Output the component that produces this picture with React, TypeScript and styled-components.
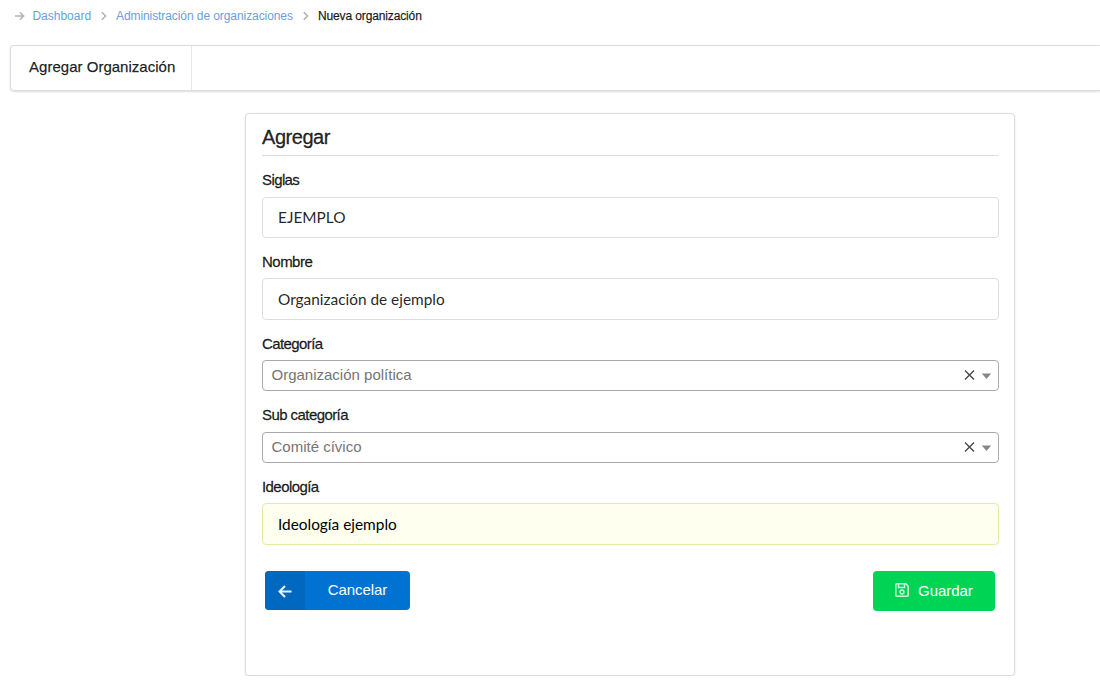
import React from 'react';
import styled, { createGlobalStyle } from 'styled-components';

const GlobalStyle = createGlobalStyle`
  * { box-sizing: border-box; }
  body {
    margin: 0;
    background: #fff;
    color: rgba(0, 0, 0, 0.87);
    font-family: "Liberation Sans", Arial, sans-serif;
    font-size: 14px;
    overflow: hidden;
  }
`;

const Breadcrumb = styled.nav`
  display: flex;
  align-items: center;
  height: 32px;
  padding-left: 14px;
  font-size: 12px;
  line-height: 16px;
  white-space: nowrap;
`;

const CrumbIcon = styled.svg`
  flex: none;
  fill: none;
  stroke: #b3b3b3;
  stroke-width: 1.6;
`;

const Crumb = styled.a<{ $width: number; $spacing: number }>`
  width: ${p => p.$width}px;
  letter-spacing: ${p => p.$spacing}px;
  color: #6a9edc;
`;

const CurrentCrumb = styled.span`
  letter-spacing: -0.13px;
  -webkit-text-stroke: 0.25px currentColor;
`;

const Menu = styled.div`
  display: flex;
  height: 46px;
  margin: 13px 0 0 10px;
  border: 1px solid #dcdddd;
  border-right: 0;
  border-radius: 4px 0 0 4px;
  box-shadow: 0 1px 2px rgba(34, 36, 38, 0.15);
`;

const MenuItem = styled.div`
  width: 181px;
  padding-left: 18px;
  border-right: 1px solid #e8e8e9;
  font-size: 15px;
  line-height: 42px;
  letter-spacing: 0.02px;
  white-space: nowrap;
  -webkit-text-stroke: 0.25px currentColor;
`;

const Card = styled.main`
  width: 770px;
  height: 563px;
  margin: 22px 0 0 245px;
  padding: 0 15px 0 16px;
  border: 1px solid #dcdddd;
  border-radius: 4px;
  box-shadow: 0 1px 2px rgba(34, 36, 38, 0.15);
`;

const Title = styled.h1`
  height: 42px;
  margin: 0 0 14px;
  border-bottom: 1px solid #dcdddd;
  font-size: 20px;
  font-weight: 400;
  line-height: 46px;
  letter-spacing: -0.45px;
  -webkit-text-stroke: 0.3px currentColor;
`;

const Field = styled.div<{ $height: number }>`
  height: ${p => p.$height}px;
`;

const Label = styled.label<{ $spacing: number; $height?: number }>`
  display: block;
  height: ${p => p.$height ?? 27}px;
  font-size: 15px;
  line-height: 20px;
  letter-spacing: ${p => p.$spacing}px;
  -webkit-text-stroke: 0.3px currentColor;
`;

const Input = styled.input<{ $filled?: boolean; $height: number }>`
  display: block;
  width: 100%;
  height: ${p => p.$height}px;
  padding: 0 15px 1px;
  border: 1px solid ${p => (p.$filled ? '#e5eaa8' : '#dedede')};
  border-radius: 4px;
  outline: 0;
  background: ${p => (p.$filled ? '#fffff0' : '#fff')};
  color: ${p => (p.$filled ? '#000' : 'rgba(0, 0, 0, 0.87)')};
  font-family: Lato, sans-serif;
  font-size: 15.4px;
`;

const Select = styled.div`
  display: flex;
  align-items: center;
  height: 31px;
  padding: 0 6px 1px 8.5px;
  border: 1px solid #aaa;
  border-radius: 4px;
`;

const SelectValue = styled.span`
  flex: 1;
  padding-bottom: 1px;
  font-size: 15px;
  color: #757575;
`;

const Actions = styled.div`
  display: flex;
  justify-content: space-between;
  padding: 0 4px 0 3px;
`;

const CancelButton = styled.button`
  display: flex;
  width: 145px;
  height: 39px;
  padding: 0;
  overflow: hidden;
  border: 0;
  border-radius: 4px;
  background: #0073d2;
  color: #fff;
  font: 15px "Liberation Sans", Arial, sans-serif;
`;

const IconCell = styled.span`
  display: flex;
  align-items: center;
  justify-content: center;
  width: 40px;
  height: 100%;
  padding-top: 1px;
  background: #0069bf;
`;

const CancelText = styled.span`
  flex: 1;
  line-height: 37px;
  letter-spacing: -0.05px;
`;

const SaveButton = styled.button`
  display: flex;
  align-items: center;
  width: 122px;
  height: 40px;
  padding: 0 0 2px 22px;
  gap: 9px;
  border: 0;
  border-radius: 4px;
  background: #00d455;
  color: #fff;
  font: 15px "Liberation Sans", Arial, sans-serif;
  letter-spacing: -0.03px;
`;

const Chevron = ({ gap }: { gap: number }) => (
  <CrumbIcon width={6} height={10} viewBox="0 0 6 10" style={{ marginRight: gap }}>
    <path d="M.8 1.2 L4.6 5 L.8 8.8" />
  </CrumbIcon>
);

const SelectIcons = () => (
  <svg width={29} height={12} viewBox="0 0 29 12">
    <path d="M2 1.5 L11 10.5 M11 1.5 L2 10.5" fill="none" stroke="#444" strokeWidth="1.3" />
    <path d="M18.8 4.5 H28.2 L23.5 10 Z" fill="#888" />
  </svg>
);

const SelectControl = ({ value }: { value: string }) => (
  <Select>
    <SelectValue>{value}</SelectValue>
    <SelectIcons />
  </Select>
);

export default function App() {
  return (
    <>
      <GlobalStyle />
      <Breadcrumb>
        <CrumbIcon width={11} height={10} viewBox="0 0 11 10" style={{ marginRight: 7.4 }}>
          <path d="M1 5 H9.6 M5.8 1.3 L9.6 5 L5.8 8.7" />
        </CrumbIcon>
        <Crumb $width={68.6} $spacing={0}>Dashboard</Crumb>
        <Chevron gap={9} />
        <Crumb $width={187} $spacing={-0.08}>Administración de organizaciones</Crumb>
        <Chevron gap={9} />
        <CurrentCrumb>Nueva organización</CurrentCrumb>
      </Breadcrumb>
      <Menu>
        <MenuItem>Agregar Organización</MenuItem>
      </Menu>
      <Card>
        <Title>Agregar</Title>
        <Field $height={82}>
          <Label $spacing={-0.6}>Siglas</Label>
          <Input $height={41} defaultValue="EJEMPLO" />
        </Field>
        <Field $height={82}>
          <Label $spacing={-0.52} $height={26}>Nombre</Label>
          <Input $height={42} defaultValue="Organización de ejemplo" />
        </Field>
        <Field $height={71}>
          <Label $spacing={-0.6} $height={26}>Categoría</Label>
          <SelectControl value="Organización política" />
        </Field>
        <Field $height={72}>
          <Label $spacing={-0.57}>Sub categoría</Label>
          <SelectControl value="Comité cívico" />
        </Field>
        <Field $height={94}>
          <Label $spacing={-0.57} $height={26}>Ideología</Label>
          <Input $filled $height={42} defaultValue="Ideología ejemplo" />
        </Field>
        <Actions>
          <CancelButton>
            <IconCell>
              <svg width={14} height={13} viewBox="0 0 14 13" fill="none" stroke="#e8f3fc" strokeWidth="2">
                <path d="M13.5 6.5 H1.5 M7 1 L1.5 6.5 L7 12" />
              </svg>
            </IconCell>
            <CancelText>Cancelar</CancelText>
          </CancelButton>
          <SaveButton>
            <svg width={14} height={14} viewBox="0 0 14 14" fill="none" stroke="#c9f6da" strokeWidth="1.5">
              <path d="M1.8 .8 H10.8 L13.2 3.2 V12.2 Q13.2 13.2 12.2 13.2 H1.8 Q.8 13.2 .8 12.2 V1.8 Q.8 .8 1.8 .8 Z M3.5 .8 V4.6 H9.5 V.8" />
              <circle cx="7" cy="9" r="1.9" />
            </svg>
            Guardar
          </SaveButton>
        </Actions>
      </Card>
    </>
  );
}
